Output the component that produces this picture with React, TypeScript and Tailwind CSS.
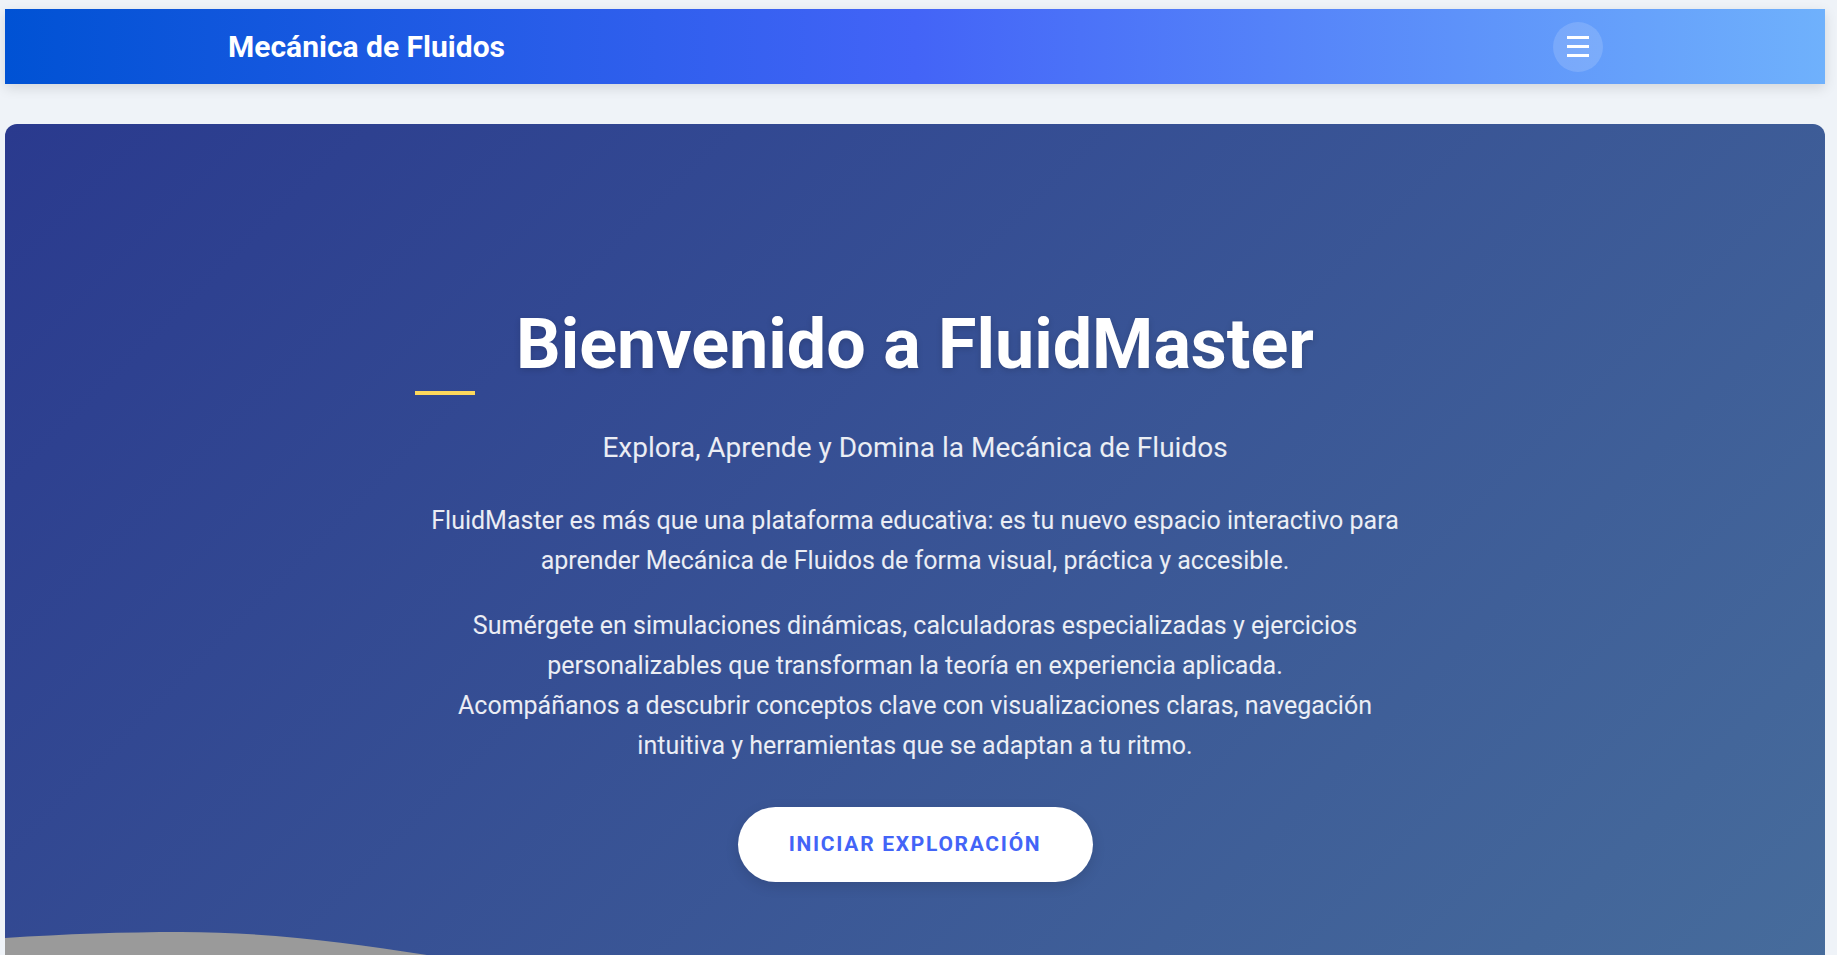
import React from 'react';

const Header: React.FC = () => (
  <header className="flex items-center justify-between h-[75px] pl-[223px] pr-[222px] bg-[linear-gradient(90deg,#0052d4_0%,#4364f7_50%,#6fb1fc_100%)] shadow-[0_4px_12px_rgba(0,0,0,0.12)]">
    <h1 className="text-[30px] font-bold text-white">Mecánica de Fluidos</h1>
    <button className="flex flex-col items-center justify-center gap-[6px] w-[50px] h-[50px] rounded-full bg-white/15">
      <span className="block w-[22px] h-[3px] bg-white" />
      <span className="block w-[22px] h-[3px] bg-white" />
      <span className="block w-[22px] h-[3px] bg-white" />
    </button>
  </header>
);

const Hero: React.FC = () => (
  <section className="relative mt-10 h-[900px] rounded-xl overflow-hidden bg-[linear-gradient(135deg,#2a3a8e_0%,#476d9c_100%)]">
    <div className="w-[1000px] mx-auto pt-[178px] flex flex-col items-center text-center">
      <h2 className="text-[70px] leading-[1.2] font-bold text-white [text-shadow:0_2px_6px_rgba(0,0,0,0.15)]">
        Bienvenido a FluidMaster
      </h2>
      <div className="self-start w-[60px] h-1 mt-[5px] bg-[#fdd85c]" />
      <p className="mt-[32px] text-[28px] leading-[1.5] text-white/90">
        Explora, Aprende y Domina la Mecánica de Fluidos
      </p>
      <p className="mt-[32px] text-[25px] leading-[40px] text-white/90">
        FluidMaster es más que una plataforma educativa: es tu nuevo espacio interactivo para<br />
        aprender Mecánica de Fluidos de forma visual, práctica y accesible.
      </p>
      <p className="mt-[25px] text-[25px] leading-[40px] text-white/90">
        Sumérgete en simulaciones dinámicas, calculadoras especializadas y ejercicios<br />
        personalizables que transforman la teoría en experiencia aplicada.<br />
        Acompáñanos a descubrir conceptos clave con visualizaciones claras, navegación<br />
        intuitiva y herramientas que se adaptan a tu ritmo.
      </p>
      <button className="mt-[41px] w-[355px] h-[75px] rounded-full bg-white text-[#4364f7] text-[21px] font-bold tracking-[1.7px] shadow-[0_4px_14px_rgba(0,0,0,0.12)]">
        INICIAR EXPLORACIÓN
      </button>
    </div>
    <svg className="absolute left-0 bottom-0 w-full h-[100px]" viewBox="0 0 1820 100" preserveAspectRatio="none">
      <path d="M0,14 C60,10 120,8 176,8 C260,8 340,18 422,31 C600,60 800,100 1000,100 L1820,100 L0,100 Z" fill="#9a9a9a" />
    </svg>
  </section>
);

export default function App() {
  return (
    <div className="min-h-screen bg-[#eff3f8] pt-[9px] pl-[5px] font-['Roboto',sans-serif]">
      <div className="w-[1820px]">
        <Header />
        <Hero />
      </div>
    </div>
  );
}
